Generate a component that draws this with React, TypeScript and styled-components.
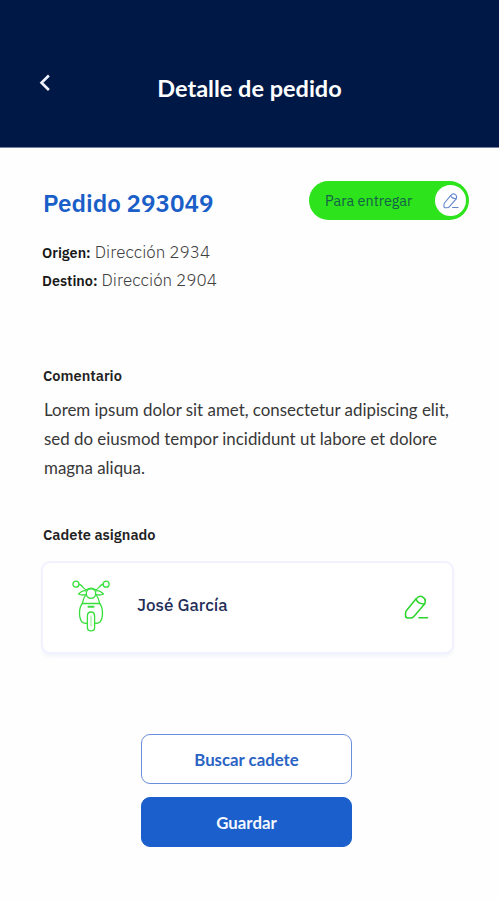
import React from "react";
import styled, { createGlobalStyle } from "styled-components";

const PLEX = `"IBM Plex Sans", "Noto Sans", sans-serif`;
const LATO = `Lato, sans-serif`;

const GlobalStyle = createGlobalStyle`
  *, *::before, *::after { box-sizing: border-box; }
  body { margin: 0; background: #fefefe; }
  h1, h2, h3, p { margin: 0; }
  button { padding: 0; border: 0; background: none; font: inherit; cursor: pointer; }
  svg { display: block; }
`;

const Screen = styled.div`
  width: 499px;
  height: 900px;
  overflow: hidden;
  background: #fefefe;
  color: #222;
  font-family: ${PLEX};
`;

const Header = styled.header`
  display: grid;
  grid-template-columns: 90px 1fr 90px;
  align-items: start;
  height: 148px;
  padding-top: 72px;
  background: #001846;
  border-bottom: 1px solid #77809c;
`;

const BackButton = styled.button`
  width: 14px;
  height: 20px;
  margin-left: 37px;
`;

const Title = styled.h1`
  color: #fff;
  font: 700 23.5px/33px ${LATO};
  letter-spacing: 0;
  text-align: center;
  white-space: nowrap;
`;

const Content = styled.main`
  display: flex;
  flex-direction: column;
  padding: 33px 30px 0 42px;
`;

const OrderRow = styled.div`
  display: flex;
  justify-content: space-between;
  align-items: flex-start;
  height: 57px;
`;

const OrderNumber = styled.h2`
  padding-left: 1px;
  color: #1a5fc8;
  font-size: 24.2px;
  font-weight: 600;
  line-height: 44px;
`;

const StatusPill = styled.div`
  display: flex;
  align-items: center;
  justify-content: space-between;
  width: 160px;
  height: 39px;
  padding: 0 3px 0 16px;
  border-radius: 20px;
  background: #2de31b;
  color: #14604a;
  font-size: 14.4px;
`;

const RoundButton = styled.button`
  display: grid;
  place-items: center;
  width: 31px;
  height: 31px;
  border-radius: 50%;
  background: #fff;
  color: #6285cd;
`;

const Address = styled.p`
  height: 28px;
  color: #404040;
  font-size: 17px;
  font-weight: 300;
  line-height: 28px;
  white-space: nowrap;
`;

const AddressLabel = styled.strong`
  color: #181818;
  font-size: 14.4px;
  font-weight: 600;
`;

const SectionTitle = styled.h3<{ $gap: number }>`
  margin-top: ${({ $gap }) => $gap}px;
  padding-left: 1px;
  color: #222;
  font-size: 14.6px;
  font-weight: 600;
  line-height: 20px;
`;

const Comment = styled.p`
  margin-top: 9px;
  padding-left: 2px;
  color: #383838;
  font: 400 16.9px/29px ${LATO};
  white-space: nowrap;
`;

const CourierCard = styled.section`
  display: flex;
  align-items: center;
  width: 413px;
  height: 93px;
  margin: 16px 0 0 -1px;
  padding: 0 23px 0 29px;
  border: 2px solid #f1f2fd;
  border-radius: 9px;
  background: #fff;
  box-shadow: 0 3px 3px #f5f6fb;
`;

const CourierName = styled.span`
  flex: 1;
  margin: -5px 0 0 27px;
  color: #252e58;
  font-size: 17px;
  font-weight: 500;
`;

const EditButton = styled.button`
  color: #2bd52b;
`;

const Actions = styled.div`
  display: flex;
  flex-direction: column;
  gap: 13px;
  width: 211px;
  margin: 80px 0 0 99px;
`;

const ActionButton = styled.button<{ $primary?: boolean }>`
  height: 50px;
  border: 1px solid ${({ $primary }) => ($primary ? "#1a5fcb" : "#6b8fdc")};
  border-radius: 9px;
  background: ${({ $primary }) => ($primary ? "#1a5fcb" : "#fff")};
  color: ${({ $primary }) => ($primary ? "#f4f8ff" : "#2a63c4")};
  font: 700 16.8px/49px ${LATO};
`;

const Pencil = ({ size, stroke }: { size: number; stroke: number }) => (
  <svg width={size} height={size} viewBox="0 0 26 26" fill="none" stroke="currentColor" strokeWidth={stroke} strokeLinecap="round" strokeLinejoin="round">
    <path d="M12.6 4Q15.8-.2 19.7 2.2Q23.4 4.6 21.4 9.4L10.5 22Q8.9 24 6.5 24H4Q1.6 24 1.6 21.4V19Q1.6 17.3 2.8 15.8Z" />
    <path d="M12.6 4Q13.4 9 21.4 9.4M15.5 23.6H24.5" />
  </svg>
);

const ScooterDrawing = styled.svg`
  margin-top: -4px;
`;

const Scooter = () => (
  <ScooterDrawing width="38" height="52" viewBox="0 0 38 52" fill="none" stroke="#36df3b" strokeWidth="1.3" strokeLinecap="round" strokeLinejoin="round">
    <circle cx="3.9" cy="4.2" r="3" />
    <circle cx="34.1" cy="4.2" r="3" />
    <path d="M6.9 4.2Q9.5 5 11.2 7.5Q12.5 9.5 14.8 9.8M31.1 4.2Q28.5 5 26.8 7.5Q25.5 9.5 23.2 9.8M13.5 10.8Q10.8 10.2 6.5 14Q9.8 15.6 13.4 14.6M24.5 10.8Q27.2 10.2 31.5 14Q28.2 15.6 24.6 14.6" />
    <path d="M14.5 9.8Q19 6.4 23.5 9.8" />
    <circle cx="19" cy="13.6" r="4.7" />
    <path d="M13.4 15.5Q11 19 10.3 23.5H27.7Q27 19 24.6 15.5" />
    <path d="M10.3 23.5Q7.5 27 7.5 33Q7.5 39 10.2 42.3Q11.8 43.5 15.4 43.5M27.7 23.5Q30.5 27 30.5 33Q30.5 39 27.8 42.3Q26.2 43.5 22.6 43.5" />
    <path d="M15.4 36Q15.4 32 19 32T22.6 36V47.7Q22.6 50.8 19 50.8T15.4 47.7Z" />
    <path d="M16.5 26.7H21.5" strokeWidth="2" />
    <path d="M19 36V46" strokeWidth=".6" />
  </ScooterDrawing>
);

const App = () => (
  <>
    <GlobalStyle />
    <Screen>
      <Header>
        <BackButton aria-label="Volver">
          <svg width="14" height="20" viewBox="0 0 14 20" fill="none" stroke="#eef2fc" strokeWidth="2.6">
            <path d="M11.9 3.5 4.5 10.8 11.9 18" />
          </svg>
        </BackButton>
        <Title>Detalle de pedido</Title>
      </Header>
      <Content>
        <OrderRow>
          <OrderNumber>Pedido 293049</OrderNumber>
          <StatusPill>
            <span>Para entregar</span>
            <RoundButton aria-label="Editar estado"><Pencil size={16} stroke={1.8} /></RoundButton>
          </StatusPill>
        </OrderRow>
        <Address><AddressLabel>Origen:</AddressLabel> Dirección 2934</Address>
        <Address><AddressLabel>Destino:</AddressLabel> Dirección 2904</Address>
        <SectionTitle $gap={72}>Comentario</SectionTitle>
        <Comment>
          Lorem ipsum dolor sit amet, consectetur adipiscing elit,<br />
          sed do eiusmod tempor incididunt ut labore et dolore<br />
          magna aliqua.
        </Comment>
        <SectionTitle $gap={43}>Cadete asignado</SectionTitle>
        <CourierCard>
          <Scooter />
          <CourierName>José García</CourierName>
          <EditButton aria-label="Editar cadete"><Pencil size={25} stroke={1.6} /></EditButton>
        </CourierCard>
        <Actions>
          <ActionButton>Buscar cadete</ActionButton>
          <ActionButton $primary>Guardar</ActionButton>
        </Actions>
      </Content>
    </Screen>
  </>
);

export default App;
